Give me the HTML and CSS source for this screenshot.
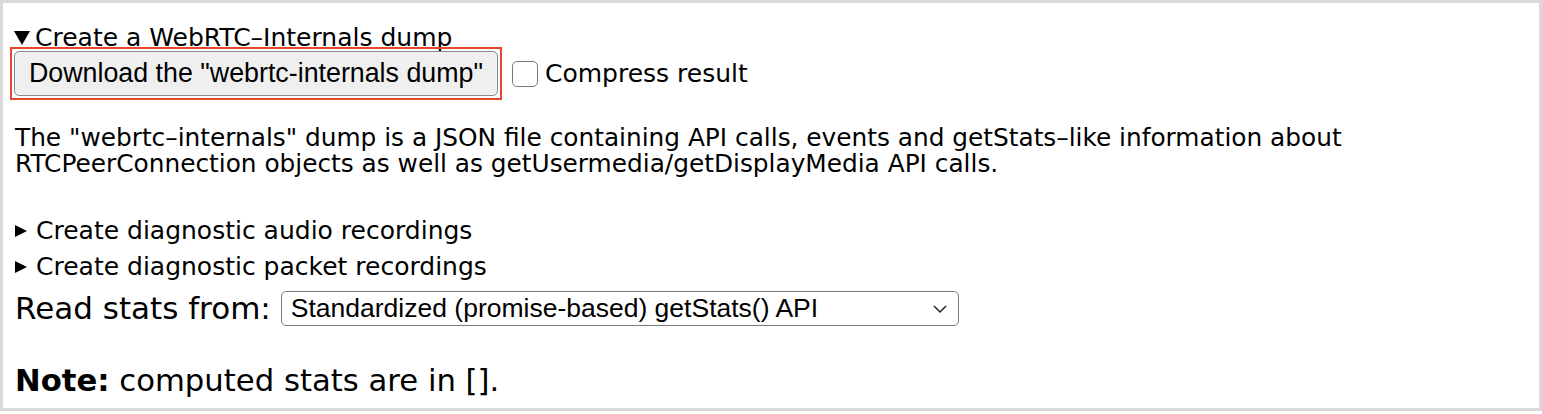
FILE: index.html
```html
<!DOCTYPE html>
<html>
<head>
<meta charset="utf-8">
<link rel="stylesheet" href="styles.css">
</head>
<body>
<div class="frame">
  <details class="section" open>
    <summary class="sum sum-open">Create a WebRTC–Internals dump</summary>
    <div class="dump-row">
      <span class="focus-ring"><button class="btn">Download the "webrtc-internals dump"</button></span>
      <label class="check"><span class="box"></span>Compress result</label>
    </div>
    <p class="desc">The "webrtc–internals" dump is a JSON file containing API calls, events and getStats–like information about<br>RTCPeerConnection objects as well as getUsermedia/getDisplayMedia API calls.</p>
  </details>
  <details class="section closed first-closed"><summary class="sum">Create diagnostic audio recordings</summary></details>
  <details class="section closed"><summary class="sum">Create diagnostic packet recordings</summary></details>
  <div class="stats-row">
    <span class="stats-label">Read stats from:</span>
    <div class="select">
      <span class="select-text">Standardized (promise-based) getStats() API</span>
      <svg class="chev" width="16" height="10" viewBox="0 0 16 10"><path d="M2 2 L8 8 L14 2" fill="none" stroke="#222" stroke-width="1.5"/></svg>
    </div>
  </div>
  <p class="note"><b>Note:</b> computed stats are in [].</p>
</div>
</body>
</html>
```
FILE: styles.css
```css
html, body { margin: 0; padding: 0; background: #fff; }
body { font-family: "DejaVu Sans", "Noto Sans", sans-serif; color: #000; }
.frame {
  box-sizing: border-box;
  width: 1542px;
  height: 411px;
  border: 3px solid #d9d9d9;
  padding: 22px 12px 0 12px;
  font-size: 25px;
}
.section { margin: 0; }
.sum {
  list-style: none;
  display: flex;
  align-items: center;
  height: 36px;
  line-height: 36px;
  cursor: default;
  font-size: 25px;
}
.sum::-webkit-details-marker { display: none; }
.sum::before {
  content: "";
  display: inline-block;
  width: 0; height: 0;
  border-top: 6.5px solid transparent;
  border-bottom: 6.5px solid transparent;
  border-left: 12px solid #000;
  margin-right: 9px;
}
.sum-open { height: 26px; line-height: 26px; }
.sum-open::before {
  border-left: 8px solid transparent;
  border-right: 8px solid transparent;
  border-top: 14px solid #000;
  border-bottom: 0;
  margin-right: 5px;
  margin-left: -1px;
}
.dump-row { display: flex; align-items: center; gap: 10px; margin-left: -5px; margin-top: -4px; }
.focus-ring {
  display: inline-flex;
  padding: 2px;
  border: 2px solid #e5452d;
}
.btn {
  font-family: "Liberation Sans", Arial, sans-serif;
  font-size: 26.8px;
  height: 45px;
  padding: 0 14px;
  background: #efefef;
  border: 1.5px solid #8a8a8a;
  border-radius: 5px;
  color: #000;
}
.check { display: inline-flex; align-items: center; gap: 7px; font-size: 25px; }
.box {
  width: 26px; height: 26px;
  box-sizing: border-box;
  border: 1.5px solid #777;
  border-radius: 5px;
  background: #fff;
}
.desc { margin: 25px 0 0 0; line-height: 26px; font-size: 24.8px; }
.first-closed { margin-top: 36px; }
.stats-row { display: flex; align-items: center; gap: 10px; margin-top: 6px; }
.stats-label { font-size: 31px; line-height: 35px; }
.select {
  box-sizing: border-box;
  width: 678px;
  height: 35px;
  border: 1.5px solid #7a7a7a;
  border-radius: 5px;
  display: flex;
  align-items: center;
  justify-content: space-between;
  padding: 0 10px 0 9px;
  font-family: "Liberation Sans", Arial, sans-serif;
  font-size: 26.5px;
}
.note { margin: 40px 0 0 0; font-size: 30.7px; line-height: 30px; }
```
